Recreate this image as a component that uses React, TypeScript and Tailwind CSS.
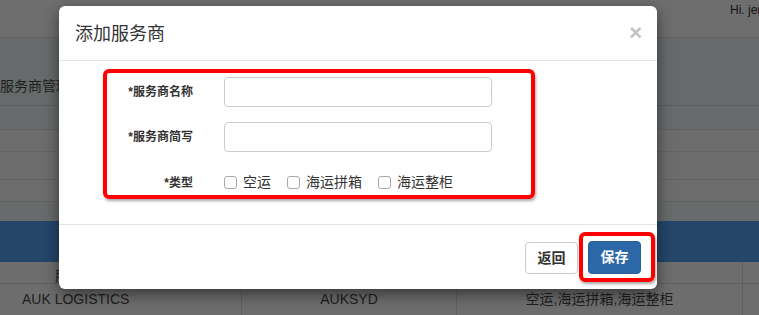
import React from "react";

const font = { fontFamily: '"Liberation Sans", "Noto Sans CJK SC", sans-serif' };

const Field: React.FC<{ label: string }> = ({ label }) => (
  <div className="flex h-[30px] items-center">
    <label className="w-[117px] whitespace-nowrap pr-[31px] text-right text-[12px] font-bold text-[#333]">{label}</label>
    <input className="h-[30px] w-[268px] rounded-[4px] border border-[#ccc] bg-white outline-none" />
  </div>
);

const Check: React.FC<{ label: string }> = ({ label }) => (
  <label className="flex items-center gap-[6px] text-[14px] text-[#333]">
    <span className="h-[13px] w-[13px] rounded-[3px] border border-[#a9a9a9] bg-white" />
    {label}
  </label>
);

const App: React.FC = () => {
  return (
    <div className="relative h-[315px] w-[759px] overflow-hidden bg-[#6e6e6e]" style={font}>
      {/* page underneath the backdrop */}
      <div className="flex h-[38px] justify-end border-b border-[#626464]">
        <span className="w-[29px] overflow-hidden whitespace-nowrap pt-[1px] text-[12px] text-[#111]">Hi. jerry</span>
      </div>
      <div className="flex h-[68px] items-end border-b border-[#5c6060] bg-[#666a6a] pb-[8px]">
        <span className="text-[14px] text-[#1e1e1e]">服务商管理</span>
      </div>
      <div className="h-[24px] border-b border-[#5f6363] bg-[#676b6b]" />
      <div className="h-[22px] border-b border-[#636363] bg-[#6c6c6c]" />
      <div className="h-[28px] border-b border-[#636363] bg-[#6c6c6c]" />
      <div className="h-[22px] border-b border-[#636363] bg-[#6c6c6c]" />
      <div className="h-[19px] bg-[#686b6b]" />
      <div className="h-[41px] bg-[#244669]" />
      <div className="grid h-[22px] grid-cols-[743px_16px] border-b border-[#606060] bg-[#6d6d6d]">
        <div className="border-r border-[#606060] pl-[55px] pt-[4px] text-[14px] text-[#1e1e1e]">服务商名称</div>
        <div />
      </div>
      <div className="grid h-[31px] grid-cols-[242px_215px_286px_16px] items-center bg-[#6d6d6d] text-[14px] text-[#1e1e1e]">
        <div className="flex h-full items-center border-r border-[#606060] pl-[22px]">AUK LOGISTICS</div>
        <div className="flex h-full items-center justify-center border-r border-[#606060]">AUKSYD</div>
        <div className="flex h-full items-center justify-center border-r border-[#606060]">空运,海运拼箱,海运整柜</div>
        <div />
      </div>

      {/* modal */}
      <div className="absolute left-[59px] top-[6px] flex h-[283px] w-[598px] flex-col rounded-[6px] bg-white shadow-[0_5px_15px_rgba(0,0,0,0.5)]">
        <div className="flex h-[55px] items-center justify-between border-b border-[#e5e5e5] pl-[16px] pr-[15px]">
          <h4 className="pt-[2px] text-[18px] text-[#333]">添加服务商</h4>
          <span className="text-[22px] font-bold leading-none text-[#c2c2c2]">×</span>
        </div>
        <div className="h-[164px] border-b border-[#e5e5e5] pl-[44px] pt-[8px]">
          <div className="flex h-[130px] w-[432px] flex-col gap-[15px] rounded-[6px] border-[4px] border-[#ff0000] pt-[4px] shadow-[1px_2px_3px_rgba(0,0,0,0.35)]">
            <Field label="*服务商名称" />
            <Field label="*服务商简写" />
            <div className="flex items-center pt-[5px]">
              <span className="w-[117px] whitespace-nowrap pr-[31px] text-right text-[12px] font-bold text-[#333]">*类型</span>
              <div className="flex gap-[16px]">
                <Check label="空运" />
                <Check label="海运拼箱" />
                <Check label="海运整柜" />
              </div>
            </div>
          </div>
        </div>
        <div className="flex flex-1 items-start justify-end gap-[10px] pr-[16px] pt-[16px]">
          <button className="mt-[1px] h-[32px] w-[53px] rounded-[4px] border border-[#ccc] bg-white text-[14px] font-bold text-[#333]">
            返回
          </button>
          <div className="relative">
            <span className="absolute left-[-9px] top-[-9px] h-[50px] w-[76px] rounded-[6px] border-[4px] border-[#ff0000] shadow-[1px_2px_3px_rgba(0,0,0,0.35)]" />
            <button className="relative h-[33px] w-[53px] rounded-[4px] border border-[#2a5f96] bg-[#2c68a8] text-[14px] font-bold text-white">
              保存
            </button>
          </div>
        </div>
      </div>
    </div>
  );
};

export default App;
